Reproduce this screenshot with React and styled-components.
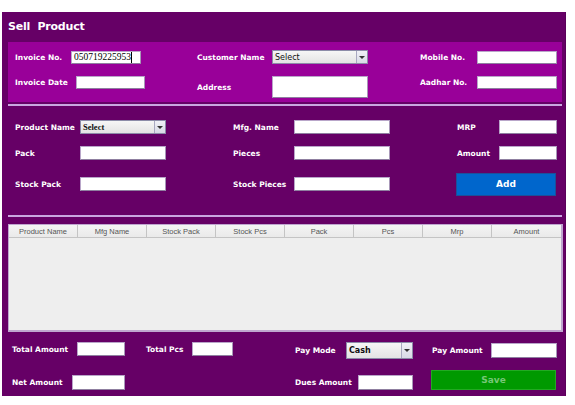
import React from "react";
import styled, { createGlobalStyle } from "styled-components";

const Global = createGlobalStyle`
  html, body { margin: 0; padding: 0; background: #ffffff; }
  body { font-family: "Liberation Sans", Arial, sans-serif; }
  * { box-sizing: border-box; }
`;

const Frame = styled.div`
  margin: 12px 0 0 2px;
  width: 564px;
  height: 384px;
  background: #660066;
  display: flex;
  flex-direction: column;
  border-right: 1px solid #5a005a;
`;

const Title = styled.div`
  height: 28px;
  display: flex;
  align-items: center;
  padding-left: 6px;
  margin-bottom: 2px;
  color: #ffffff;
  font: bold 11px "DejaVu Sans", Verdana, sans-serif;
  letter-spacing: -0.2px;
  white-space: pre;
`;

const TopPanel = styled.div`
  margin: 0 3px 0 6px;
  height: 60px;
  background: #990099;
  padding: 8px 0 0 7px;
  display: grid;
  grid-template-columns: 182px 223px 1fr;
  grid-template-rows: 14px 22px;
  row-gap: 12px;
  align-items: start;
`;

const Divider = styled.div`
  height: 2px;
  background: #c9a6e0;
  margin: ${(p) => p.$top || 0}px 3px 0 6px;
`;

const MidPanel = styled.div`
  height: 109px;
  padding: 14px 0 0 13px;
  display: grid;
  grid-template-columns: 218px 224px 1fr;
  grid-template-rows: 14px 14px 24px;
  row-gap: 12px;
  align-items: center;
`;

const Field = styled.div`
  display: flex;
  align-items: center;
  align-self: ${(p) => p.$align || "auto"};
  height: ${(p) => (p.$h ? p.$h + "px" : "auto")};
`;

const Label = styled.span`
  width: ${(p) => p.$w}px;
  flex: none;
  color: #ffffff;
  font: bold 7.5px "DejaVu Sans", Verdana, sans-serif;
  white-space: nowrap;
`;

const TextBox = styled.div`
  width: ${(p) => p.$w}px;
  height: ${(p) => p.$h || 14}px;
  flex: none;
  background: #ffffff;
  border: 1px solid #b9a6c9;
  border-bottom-color: #8f7fa0;
  border-right-color: #a897b8;
  display: flex;
  align-items: center;
  padding-left: 2px;
  font: 9.5px "Liberation Serif", "Times New Roman", serif;
  color: #000;
`;

const Caret = styled.span`
  display: inline-block;
  width: 1px;
  height: 11px;
  background: #000;
`;

const SelectBox = styled.div`
  width: ${(p) => p.$w}px;
  height: ${(p) => p.$h || 14}px;
  flex: none;
  display: flex;
  border: 1px solid #8c8ca8;
  background: linear-gradient(#f6f6f6, #e4e4e4);
`;

const SelectText = styled.div`
  flex: 1;
  display: flex;
  align-items: center;
  padding-left: 2px;
  color: #111;
  font: ${(p) =>
    p.$serif
      ? `bold 8.5px "Liberation Serif", "Times New Roman", serif`
      : `${p.$bold ? "bold" : "normal"} 8px "DejaVu Sans", Verdana, sans-serif`};
`;

const Arrow = styled.div`
  width: 11px;
  flex: none;
  border-left: 1px solid #a8a8c0;
  background: linear-gradient(#f0f0f6, #d8dae6);
  display: flex;
  align-items: center;
  justify-content: center;
  &::after {
    content: "";
    border-left: 3px solid transparent;
    border-right: 3px solid transparent;
    border-top: 3px solid #333;
  }
`;

const Button = styled.div`
  width: ${(p) => p.$w}px;
  height: ${(p) => p.$h}px;
  background: ${(p) => p.$bg};
  border: 1px solid ${(p) => p.$border};
  color: ${(p) => p.$color};
  display: flex;
  align-items: center;
  justify-content: center;
  font: bold 9px "DejaVu Sans", Verdana, sans-serif;
  margin-left: ${(p) => p.$ml || 0}px;
`;

const TableWrap = styled.div`
  padding-top: 7px;
`;

const Table = styled.div`
  margin-left: 6px;
  width: 555px;
  height: 108px;
  background: #eeeeee;
  border: 1px solid #bfa6cf;
  border-right-width: 2px;
  border-bottom-width: 2px;
  display: flex;
  flex-direction: column;
`;

const HeaderRow = styled.div`
  height: 13px;
  display: grid;
  grid-template-columns: repeat(8, 1fr);
  border-bottom: 1px solid #c4c4c4;
  background: linear-gradient(#f4f4f4, #eaeaea);
`;

const HeaderCell = styled.div`
  display: flex;
  align-items: center;
  justify-content: center;
  border-right: 1px solid #c4c4c4;
  color: #555;
  font: 7.5px "Liberation Sans", Arial, sans-serif;
  &:last-child { border-right: none; }
`;

const BottomPanel = styled.div`
  flex: 1;
  padding: 10px 0 0 10px;
  display: grid;
  grid-template-columns: 134px 149px 137px 1fr;
  grid-template-rows: 17px 20px;
  row-gap: 11px;
  align-items: start;
`;

const Empty = styled.div``;

const columns = [
  "Product Name",
  "Mfg Name",
  "Stock Pack",
  "Stock Pcs",
  "Pack",
  "Pcs",
  "Mrp",
  "Amount",
];

export default function App() {
  return (
    <>
      <Global />
      <Frame>
        <Title>{"Sell  Product"}</Title>
        <TopPanel>
          <Field $h={14}>
            <Label $w={56}>Invoice No.</Label>
            <TextBox $w={70} $h={13}>
              050719225953
              <Caret />
            </TextBox>
          </Field>
          <Field $h={14}>
            <Label $w={75}>Customer Name</Label>
            <SelectBox $w={96} $h={14}>
              <SelectText>Select</SelectText>
              <Arrow />
            </SelectBox>
          </Field>
          <Field $h={14}>
            <Label $w={57}>Mobile No.</Label>
            <TextBox $w={80} $h={13} />
          </Field>
          <Field $h={13}>
            <Label $w={61}>Invoice Date</Label>
            <TextBox $w={69} $h={13} />
          </Field>
          <Field $h={22}>
            <Label $w={75}>Address</Label>
            <TextBox $w={96} $h={22} />
          </Field>
          <Field $h={13}>
            <Label $w={57}>Aadhar No.</Label>
            <TextBox $w={80} $h={13} />
          </Field>
        </TopPanel>
        <Divider $top={2} />
        <MidPanel>
          <Field>
            <Label $w={65}>Product Name</Label>
            <SelectBox $w={86} $h={14}>
              <SelectText $serif>Select</SelectText>
              <Arrow />
            </SelectBox>
          </Field>
          <Field>
            <Label $w={61}>Mfg. Name</Label>
            <TextBox $w={96} $h={14} />
          </Field>
          <Field>
            <Label $w={42}>MRP</Label>
            <TextBox $w={58} $h={14} />
          </Field>
          <Field>
            <Label $w={65}>Pack</Label>
            <TextBox $w={86} $h={14} />
          </Field>
          <Field>
            <Label $w={61}>Pieces</Label>
            <TextBox $w={96} $h={14} />
          </Field>
          <Field>
            <Label $w={42}>Amount</Label>
            <TextBox $w={58} $h={14} />
          </Field>
          <Field>
            <Label $w={65}>Stock Pack</Label>
            <TextBox $w={86} $h={14} />
          </Field>
          <Field>
            <Label $w={61}>Stock Pieces</Label>
            <TextBox $w={96} $h={14} />
          </Field>
          <Field>
            <Button
              $w={100}
              $h={23}
              $ml={-1}
              $bg="#0066cc"
              $border="#1d4f9a"
              $color="#ffffff"
            >
              Add
            </Button>
          </Field>
        </MidPanel>
        <Divider />
        <TableWrap>
          <Table>
            <HeaderRow>
              {columns.map((c) => (
                <HeaderCell key={c}>{c}</HeaderCell>
              ))}
            </HeaderRow>
          </Table>
        </TableWrap>
        <BottomPanel>
          <Field $h={14}>
            <Label $w={65}>Total Amount</Label>
            <TextBox $w={48} $h={14} />
          </Field>
          <Field $h={14}>
            <Label $w={46}>Total Pcs</Label>
            <TextBox $w={41} $h={14} />
          </Field>
          <Field $h={17}>
            <Label $w={51}>Pay Mode</Label>
            <SelectBox $w={67} $h={17}>
              <SelectText $bold>Cash</SelectText>
              <Arrow />
            </SelectBox>
          </Field>
          <Field $h={16}>
            <Label $w={59}>Pay Amount</Label>
            <TextBox $w={66} $h={15} />
          </Field>
          <Field $align="end">
            <Label $w={60}>Net Amount</Label>
            <TextBox $w={53} $h={15} />
          </Field>
          <Empty />
          <Field $align="end">
            <Label $w={63}>Dues Amount</Label>
            <TextBox $w={55} $h={15} />
          </Field>
          <Field $align="end">
            <Button
              $w={125}
              $h={20}
              $ml={-1}
              $bg="#009900"
              $border="#22aa22"
              $color="#77c777"
            >
              Save
            </Button>
          </Field>
        </BottomPanel>
      </Frame>
    </>
  );
}
